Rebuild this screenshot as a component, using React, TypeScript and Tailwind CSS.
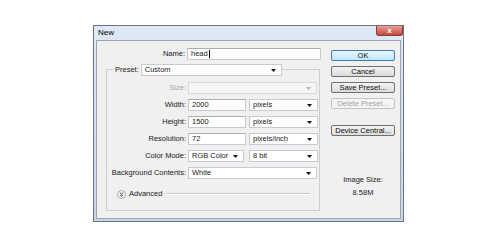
import React from 'react'

function Arrow({ disabled }: { disabled?: boolean }) {
    return (
        <svg width="5" height="3" viewBox="0 0 5 3">
            <polygon points="0,0 5,0 2.5,3" fill={disabled ? '#b5b5b5' : '#111'} />
        </svg>
    )
}

function Select({ value, className, disabled }: { value?: string; className: string; disabled?: boolean }) {
    return (
        <div
            className={`flex h-[12px] items-center justify-between border pl-[3px] pr-[5px] ${
                disabled ? 'border-[#d9d9d9] bg-[#f4f4f4]' : 'border-[#c5cbd2] bg-white'
            } ${className}`}
        >
            <span className="leading-none">{value}</span>
            <Arrow disabled={disabled} />
        </div>
    )
}

function Field({ value, className, caret }: { value: string; className: string; caret?: boolean }) {
    return (
        <div className={`flex h-[12px] items-center border border-[#c5cbd2] border-t-[#abadb3] bg-white pl-[3px] ${className}`}>
            <span className="leading-none">{value}</span>
            {caret && <span className="ml-[1px] h-[8px] w-px bg-black" />}
        </div>
    )
}

function Row({ label, children }: { label: string; children: React.ReactNode }) {
    return (
        <div className="flex h-[12px] items-center gap-[2px]">
            <span className="w-[79px] text-right leading-none">{label}</span>
            {children}
        </div>
    )
}

function Btn({ children, primary, disabled }: { children: React.ReactNode; primary?: boolean; disabled?: boolean }) {
    let look = 'border-[#707070] from-[#f3f3f3] to-[#dadada] text-[#111]'
    if (primary) look = 'border-[#3c7fb1] from-[#eaf6fd] to-[#bee6fd] text-[#111]'
    if (disabled) look = 'border-[#c4c4c4] from-[#f4f4f4] to-[#f4f4f4] text-[#a3a3a3]'
    return (
        <div className={`flex h-[11px] w-[64px] items-center justify-center rounded-[2px] border bg-gradient-to-b leading-none ${look}`}>
            {children}
        </div>
    )
}

export default function App() {
    return (
        <div className="h-[250px] w-[499px] bg-white pl-[93px] pt-[25px] font-['Liberation_Sans',Arial,sans-serif] text-[7.5px] text-[#1a1a1a]">
            <div className="flex h-[197px] w-[311px] flex-col border border-[#6b7480] bg-gradient-to-b from-[#dfe9f5] via-[#d3e0ef] to-[#c9d6e6]">
                {/* title bar */}
                <div className="flex h-[14px] items-start justify-between">
                    <span className="pl-[4px] pt-[3px] text-[8px] leading-none text-black">New</span>
                    <div className="flex h-[10px] w-[27px] items-center justify-center rounded-b-[3px] border border-t-0 border-[#8b3b32] bg-gradient-to-b from-[#e8a093] to-[#c4453a]">
                        <span className="text-[8px] font-bold leading-none text-white">x</span>
                    </div>
                </div>

                {/* content panel */}
                <div className="ml-[2px] flex h-[179px] w-[305px] border border-[#9aa5b1] bg-[#f0f0f0]">
                    <div className="w-[234px] pt-[7px]">
                        <div className="flex h-[12px] items-center gap-[2px]">
                            <span className="w-[88px] text-right leading-none">Name:</span>
                            <Field value="head" caret className="w-[134px]" />
                        </div>

                        <div className="ml-[9px] mt-[9px] w-[214px] border border-[#cdcdcd] pb-[11px]">
                            <div className="-mt-[6px] ml-[6px] flex h-[12px] items-center">
                                <span className="bg-[#f0f0f0] px-[2px] leading-none">Preset:</span>
                                <Select value="Custom" className="w-[141px]" />
                            </div>

                            <div className="mt-[6px] flex flex-col gap-[5px]">
                                <Row label="">
                                    <span className="-ml-[21px] w-[19px] text-right leading-none text-[#a8a8a8]">Size:</span>
                                    <Select disabled className="w-[129px]" />
                                </Row>
                                <Row label="Width:">
                                    <Field value="2000" className="w-[58px]" />
                                    <Select value="pixels" className="ml-[1px] w-[69px]" />
                                </Row>
                                <Row label="Height:">
                                    <Field value="1500" className="w-[58px]" />
                                    <Select value="pixels" className="ml-[1px] w-[69px]" />
                                </Row>
                                <Row label="Resolution:">
                                    <Field value="72" className="w-[58px]" />
                                    <Select value="pixels/inch" className="ml-[1px] w-[69px]" />
                                </Row>
                                <Row label="Color Mode:">
                                    <Select value="RGB Color" className="w-[56px]" />
                                    <Select value="8 bit" className="ml-[3px] w-[69px]" />
                                </Row>
                                <Row label="Background Contents:">
                                    <Select value="White" className="w-[129px]" />
                                </Row>
                            </div>

                            <div className="ml-[10px] mr-[9px] mt-[10px] flex h-[10px] items-center">
                                <svg width="9" height="9" viewBox="0 0 9 9">
                                    <circle cx="4.5" cy="4.5" r="4" fill="#f7f7f7" stroke="#9a9a9a" strokeWidth="0.8" />
                                    <polyline points="2.8,2.6 4.5,4.1 6.2,2.6" fill="none" stroke="#333" strokeWidth="0.9" />
                                    <polyline points="2.8,4.8 4.5,6.3 6.2,4.8" fill="none" stroke="#333" strokeWidth="0.9" />
                                </svg>
                                <span className="ml-[3px] leading-none">Advanced</span>
                                <div className="ml-[4px] h-[2px] flex-1 border-t border-[#c8c8c8] bg-white" />
                            </div>
                        </div>
                    </div>

                    <div className="flex w-[64px] flex-col pt-[9px]">
                        <div className="flex flex-col gap-[5px]">
                            <Btn primary>OK</Btn>
                            <Btn>Cancel</Btn>
                            <Btn>Save Preset...</Btn>
                            <Btn disabled>Delete Preset...</Btn>
                        </div>
                        <div className="mt-[16px]">
                            <Btn>Device Central...</Btn>
                        </div>
                        <div className="mt-[39px] flex flex-col items-center gap-[3px] leading-[10px]">
                            <span>Image Size:</span>
                            <span>8.58M</span>
                        </div>
                    </div>
                </div>
            </div>
        </div>
    )
}
